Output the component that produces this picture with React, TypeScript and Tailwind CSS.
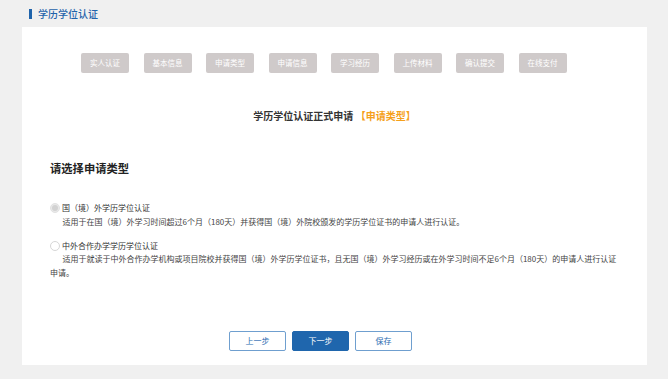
const steps = ["实人认证", "基本信息", "申请类型", "申请信息", "学习经历", "上传材料", "确认提交", "在线支付"];

const font = { fontFamily: '"Noto Sans CJK SC", "Noto Sans", sans-serif' };

export default function App() {
  return (
    <div className="h-[379px] w-[668px] bg-[#f0f0f0] text-[#333]" style={font}>
      <div className="flex h-[27px] items-center gap-[6px] pl-[29px]">
        <span className="h-[10px] w-[3px] bg-[#1f63ab]" />
        <span className="text-[10px] font-medium leading-none text-[#1f63ab]">学历学位认证</span>
      </div>

      <div className="ml-[22px] mr-[21px] bg-white px-[28px] pb-[14px]">
        <div className="flex gap-[14.5px] pl-[31px] pt-[26px]">
          {steps.map((s) => (
            <div
              key={s}
              className="flex h-[20px] w-[48px] items-center justify-center rounded-[2px] bg-[#cfcaca] text-[7.5px] text-white"
            >
              {s}
            </div>
          ))}
        </div>

        <div className="mt-[36px] text-center text-[10px] font-bold leading-[14px] text-[#333]">
          学历学位认证正式申请 <span className="text-[#f5a01a]">【申请类型】</span>
        </div>

        <div className="mt-[37px] text-[11.3px] font-bold leading-[16px] text-[#222]">请选择申请类型</div>

        <div className="mt-[25px] flex h-[13px] items-center gap-[2px] text-[8px] leading-[13px] text-[#333]">
          <span className="flex h-[10px] w-[10px] items-center justify-center rounded-full border border-[#e2e2e2] bg-[#e9e9e9]">
            <span className="h-[6px] w-[6px] rounded-full bg-[#d2d2d2]" />
          </span>
          国（境）外学历学位认证
        </div>
        <p className="mt-[1px] indent-[12.5px] text-[8px] leading-[14px] text-[#444]">
          适用于在国（境）外学习时间超过6个月（180天）并获得国（境）外院校颁发的学历学位证书的申请人进行认证。
        </p>

        <div className="mt-[10px] flex h-[13px] items-center gap-[2px] text-[8px] leading-[13px] text-[#333]">
          <span className="h-[10px] w-[10px] rounded-full border border-[#d6d6d6] bg-white" />
          中外合作办学学历学位认证
        </div>
        <p className="indent-[12.5px] text-[8px] leading-[14px] text-[#444]">
          适用于就读于中外合作办学机构或项目院校并获得国（境）外学历学位证书，且无国（境）外学习经历或在外学习时间不足6个月（180天）的申请人进行认证申请。
        </p>

        <div className="mt-[51px] flex gap-[6px] pl-[179px]">
          <button className="h-[20px] w-[57px] rounded-[2px] border border-[#6f9fcf] bg-white text-[8px] text-[#2a6bb0]">
            上一步
          </button>
          <button className="h-[20px] w-[57px] rounded-[2px] border border-[#1f66ad] bg-[#1f66ad] text-[8px] text-white">
            下一步
          </button>
          <button className="h-[20px] w-[57px] rounded-[2px] border border-[#6f9fcf] bg-white text-[8px] text-[#2a6bb0]">
            保存
          </button>
        </div>
      </div>
    </div>
  );
}
